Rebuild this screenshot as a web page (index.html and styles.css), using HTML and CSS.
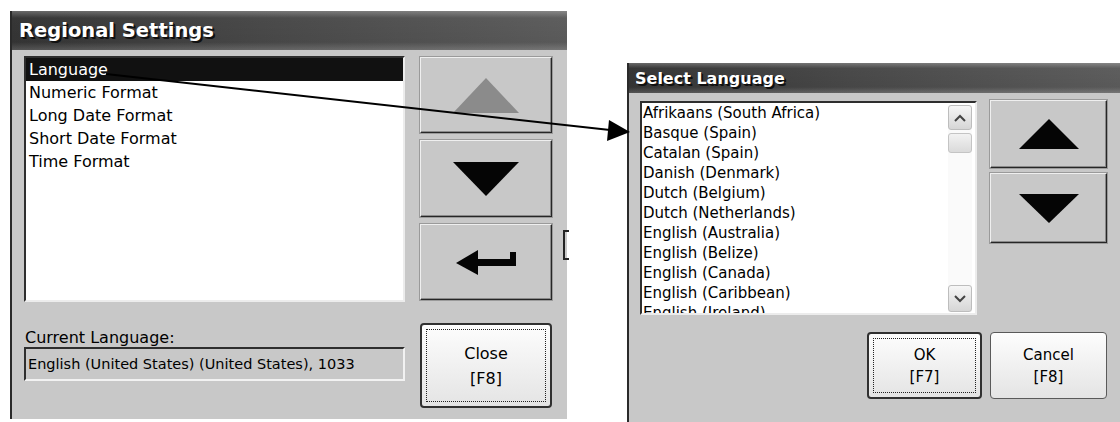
FILE: index.html
```html
<!DOCTYPE html>
<html lang="en">
<head>
    <meta charset="UTF-8">
    <title>Regional Settings</title>
    <link rel="stylesheet" href="styles.css">
</head>
<body>

<div class="stage">

    <div class="dialog regional">
        <div class="titlebar">Regional Settings</div>
        <div class="panel">
            <ul class="listbox">
                <li class="selected">Language</li>
                <li>Numeric Format</li>
                <li>Long Date Format</li>
                <li>Short Date Format</li>
                <li>Time Format</li>
            </ul>

            <div class="nav">
                <div class="navbtn up-btn">
                    <svg width="66" height="35" viewBox="0 0 66 35"><polygon points="33,0 66,35 0,35" fill="#8b8b8b"/></svg>
                </div>
                <div class="navbtn down-btn">
                    <svg width="66" height="34" viewBox="0 0 66 34"><polygon points="0,0 66,0 33,34" fill="#050505"/></svg>
                </div>
                <div class="navbtn enter-btn">
                    <svg width="60" height="25" viewBox="0 0 60 25">
                        <polygon points="0,13 22,0 22,25" fill="#050505"/>
                        <rect x="21" y="9" width="39" height="7" fill="#050505"/>
                        <rect x="54" y="2" width="6" height="14" fill="#050505"/>
                    </svg>
                </div>
            </div>

            <div class="current">
                <div class="label">Current Language:</div>
                <div class="field">English (United States) (United States), 1033</div>
            </div>

            <div class="pushbtn default close-btn">
                <span>Close</span>
                <span>[F8]</span>
            </div>
        </div>
        <span class="stub"></span>
    </div>

    <div class="dialog select">
        <div class="titlebar small">Select Language</div>
        <div class="panel">
            <div class="listbox langs">
                <ul>
                    <li>Afrikaans (South Africa)</li>
                    <li>Basque (Spain)</li>
                    <li>Catalan (Spain)</li>
                    <li>Danish (Denmark)</li>
                    <li>Dutch (Belgium)</li>
                    <li>Dutch (Netherlands)</li>
                    <li>English (Australia)</li>
                    <li>English (Belize)</li>
                    <li>English (Canada)</li>
                    <li>English (Caribbean)</li>
                    <li>English (Ireland)</li>
                </ul>
                <div class="scrollbar">
                    <div class="sbtn">
                        <svg width="12" height="8" viewBox="0 0 12 8"><polyline points="1,7 6,2 11,7" fill="none" stroke="#444" stroke-width="2"/></svg>
                    </div>
                    <div class="thumb"></div>
                    <div class="track"></div>
                    <div class="sbtn down">
                        <svg width="12" height="8" viewBox="0 0 12 8"><polyline points="1,1 6,6 11,1" fill="none" stroke="#444" stroke-width="2"/></svg>
                    </div>
                </div>
            </div>

            <div class="nav small">
                <div class="navbtn">
                    <svg width="60" height="30" viewBox="0 0 60 30"><polygon points="30,0 60,30 0,30" fill="#050505"/></svg>
                </div>
                <div class="navbtn">
                    <svg width="60" height="29" viewBox="0 0 60 29"><polygon points="0,0 60,0 30,29" fill="#050505"/></svg>
                </div>
            </div>

            <div class="actions">
                <div class="pushbtn default ok-btn">
                    <span>OK</span>
                    <span>[F7]</span>
                </div>
                <div class="pushbtn cancel-btn">
                    <span>Cancel</span>
                    <span>[F8]</span>
                </div>
            </div>
        </div>
    </div>

    <!-- callout arrow from the Language entry to the language dialog -->
    <svg class="pointer" width="1120" height="422" viewBox="0 0 1120 422">
        <line x1="106" y1="74" x2="610" y2="130" stroke="#000" stroke-width="2"/>
        <polygon points="630,132 607,141 609,120" fill="#000"/>
    </svg>

</div>

</body>
</html>
```

FILE: styles.css
```css
body {
    margin: 0;
    background-color: #fff;
    font-family: "DejaVu Sans", sans-serif;
    color: #000;
}
.stage {
    position: relative;
    width: 1120px;
    height: 422px;
    display: flex;
    align-items: flex-start;
    overflow: hidden;
}
.dialog {
    background-color: #c8c8c8;
    border-left: 2px solid #2a2a2a;
    box-sizing: border-box;
    position: relative;
}
.regional {
    margin: 11px 0 0 10px;
    width: 557px;
    height: 408px;
}
.select {
    margin: 63px 0 0 60px;
    flex: 1;
    height: 359px;
}
.titlebar {
    height: 39px;
    display: flex;
    align-items: center;
    padding-left: 7px;
    color: #fff;
    font-weight: bold;
    font-size: 19.5px;
    text-shadow: 2px 2px 0 #101010, 1px 1px 0 #101010;
    background:
        linear-gradient(to bottom, rgba(255,255,255,0.25), rgba(255,255,255,0) 18%, rgba(0,0,0,0.05) 80%, rgba(255,255,255,0.15)),
        linear-gradient(to right, #363636, #4a4a4a 45%, #5e5e5e);
}
.titlebar.small {
    height: 30px;
    font-size: 16px;
    padding-left: 6px;
}
.regional .panel {
    display: grid;
    grid-template-columns: 381px 132px;
    grid-template-rows: 246px 85px;
    column-gap: 15px;
    row-gap: 21px;
    padding: 6px 0 0 12px;
}
.select .panel {
    display: grid;
    grid-template-columns: 337px 117px;
    grid-template-rows: 214px 67px;
    column-gap: 13px;
    row-gap: 17px;
    padding: 8px 0 0 11px;
}
.listbox {
    margin: 0;
    padding: 0;
    list-style: none;
    background-color: #fff;
    border-style: solid;
    border-width: 2px;
    border-color: #2e2e2e #ececec #ececec #2e2e2e;
    box-sizing: border-box;
    overflow: hidden;
}
.listbox li {
    height: 23px;
    line-height: 23px;
    padding-left: 3px;
    font-size: 16px;
    white-space: nowrap;
}
.listbox li.selected {
    background-color: #111;
    color: #fff;
}
.langs {
    display: flex;
}
.langs ul {
    flex: 1;
    margin: 0;
    padding: 0;
    list-style: none;
    overflow: hidden;
}
.langs li {
    height: 20px;
    line-height: 20px;
    padding-left: 1px;
    font-size: 15px;
}
.scrollbar {
    width: 24px;
    margin: 2px 3px 1px 0;
    display: flex;
    flex-direction: column;
    background-color: #fafafa;
}
.sbtn {
    height: 25px;
    display: flex;
    align-items: center;
    justify-content: center;
    border: 1px solid #bdbdbd;
    border-radius: 3px;
    background: linear-gradient(#f6f6f6, #d6d6d6);
    box-sizing: border-box;
}
.sbtn.down {
    height: 27px;
}
.thumb {
    height: 20px;
    margin-top: 3px;
    border: 1px solid #c4c4c4;
    border-radius: 3px;
    background: linear-gradient(#f2f2f2, #dadada);
    box-sizing: border-box;
}
.track {
    flex: 1;
}
.nav {
    display: flex;
    flex-direction: column;
    gap: 7px;
    padding-top: 1px;
}
.nav.small {
    gap: 5px;
    padding-top: 0;
    margin-top: -1px;
}
.navbtn {
    display: flex;
    align-items: center;
    justify-content: center;
    background-color: #c8c8c8;
    border: 1px solid;
    border-color: #efefef #262626 #262626 #efefef;
    box-shadow: inset -1px -1px 0 #8a8a8a, 0 0 0 1px #9a9a9a;
    box-sizing: border-box;
}
.up-btn { height: 76px; }
.down-btn { height: 77px; }
.enter-btn { height: 76px; }
.nav.small .navbtn:first-child { height: 68px; }
.nav.small .navbtn:last-child { height: 70px; }
.current {
    padding-top: 6px;
}
.label {
    font-size: 16px;
    line-height: 18px;
    padding-left: 1px;
}
.field {
    height: 34px;
    line-height: 30px;
    padding-left: 2px;
    font-size: 14.5px;
    white-space: nowrap;
    border-style: solid;
    border-width: 2px;
    border-color: #2e2e2e #f2f2f2 #f2f2f2 #2e2e2e;
    box-sizing: border-box;
}
.pushbtn {
    position: relative;
    display: flex;
    flex-direction: column;
    align-items: center;
    justify-content: center;
    font-size: 15px;
    line-height: 22px;
    border: 1px solid #5a5a5a;
    border-radius: 4px;
    background: linear-gradient(#fdfdfd, #e4e4e4);
    box-sizing: border-box;
}
.pushbtn.default {
    border: 2px solid #303030;
}
.pushbtn.default::after {
    content: "";
    position: absolute;
    top: 4px;
    left: 4px;
    right: 4px;
    bottom: 4px;
    border: 1px dotted #222;
}
.close-btn {
    font-size: 16px;
    line-height: 25px;
}
.actions {
    grid-column: 1 / span 2;
    display: flex;
    justify-content: flex-end;
    gap: 8px;
}
.ok-btn { width: 115px; }
.cancel-btn { width: 117px; }
.stub {
    position: absolute;
    left: 551px;
    top: 219px;
    width: 4px;
    height: 26px;
    border: 2px solid #222;
    border-right: none;
}
.pointer {
    position: absolute;
    top: 0;
    left: 0;
    pointer-events: none;
}
```
